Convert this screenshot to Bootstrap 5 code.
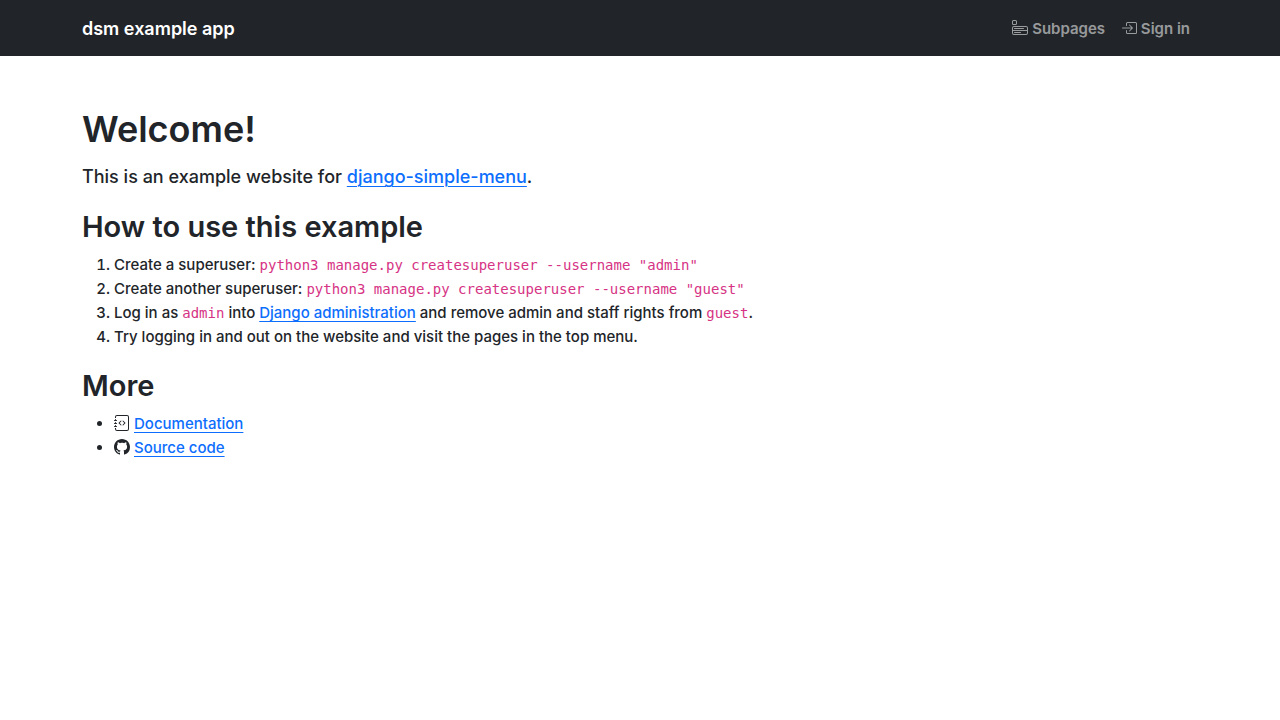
<!DOCTYPE html>
<html lang="en">
<head>
<meta charset="utf-8">
<meta name="viewport" content="width=device-width, initial-scale=1">
<title>dsm example app</title>
<link rel="stylesheet" href="https://cdn.jsdelivr.net/npm/bootstrap@5.3.0/dist/css/bootstrap.min.css">
<style>
body { font-family: Inter, "Liberation Sans", sans-serif; font-size: 15px; font-weight: 500; line-height: 24px; color: #212529; }
.navbar { padding: 9px 0 7px; }
.navbar-brand { font-size: 18px; line-height: 30px; font-weight: 600; }
.nav-link { font-size: 15px; font-weight: 600; }
h1 { font-size: 36px; line-height: 50px; font-weight: 600; }
h2 { font-size: 29px; line-height: 37px; font-weight: 600; }
.lead { font-size: 18px; line-height: 30px; font-weight: 500; }
main ol { margin-bottom: 18px; }
main a { text-underline-offset: 3px; text-decoration-thickness: 1px; }
code { font-family: "DejaVu Sans Mono", "Liberation Mono", monospace; font-size: 14px; }
.icon { width: 16px; height: 16px; vertical-align: -2px; fill: currentColor; }
</style>
</head>
<body>
<nav class="navbar navbar-expand-lg navbar-dark bg-dark">
  <div class="container">
    <a class="navbar-brand" href="#">dsm example app</a>
    <button class="navbar-toggler" type="button" data-bs-toggle="collapse" data-bs-target="#menu" aria-controls="menu" aria-expanded="false" aria-label="Toggle navigation"><span class="navbar-toggler-icon"></span></button>
    <div class="collapse navbar-collapse" id="menu">
      <ul class="navbar-nav ms-auto">
        <li class="nav-item"><a class="nav-link" href="#"><svg class="icon" viewBox="0 0 16 16" aria-hidden="true"><path d="M0 1.500A1.500 1.500 0 0 1 1.500 0h2A1.500 1.500 0 0 1 5 1.500v2A1.500 1.500 0 0 1 3.500 5h-2A1.500 1.500 0 0 1 0 3.500v-2zM1.500 1a.5.5 0 0 0-.5.5v2a.5.5 0 0 0 .5.5h2a.5.5 0 0 0 .5-.5v-2a.5.5 0 0 0-.5-.5h-2zM0 8a2 2 0 0 1 2-2h12a2 2 0 0 1 2 2v5a2 2 0 0 1-2 2H2a2 2 0 0 1-2-2V8zm1 3v2a1 1 0 0 0 1 1h12a1 1 0 0 0 1-1v-2H1zm14-1V8a1 1 0 0 0-1-1H2a1 1 0 0 0-1 1v2h14zM2 8.500a.5.5 0 0 1 .5-.5h9a.5.5 0 0 1 0 1h-9a.5.5 0 0 1-.5-.5zm0 4a.5.5 0 0 1 .5-.5h6a.5.5 0 0 1 0 1h-6a.5.5 0 0 1-.5-.5z"/></svg> Subpages</a></li>
        <li class="nav-item"><a class="nav-link" href="#"><svg class="icon" viewBox="0 0 16 16" aria-hidden="true"><path fill-rule="evenodd" d="M6 3.500a.5.5 0 0 1 .5-.5h8a.5.5 0 0 1 .5.5v9a.5.5 0 0 1-.5.5h-8a.5.5 0 0 1-.5-.5v-2a.5.5 0 0 0-1 0v2A1.500 1.500 0 0 0 6.500 14h8a1.500 1.500 0 0 0 1.500-1.500v-9A1.500 1.500 0 0 0 14.500 2h-8A1.500 1.500 0 0 0 5 3.500v2a.5.5 0 0 0 1 0z"/><path fill-rule="evenodd" d="M11.854 8.354a.5.5 0 0 0 0-.708l-3-3a.5.5 0 1 0-.708.708L10.293 7.500H1.500a.5.5 0 0 0 0 1h8.793l-2.147 2.146a.5.5 0 0 0 .708.708z"/></svg> Sign in</a></li>
      </ul>
    </div>
  </div>
</nav>
<main class="container py-5">
  <h1>Welcome!</h1>
  <p class="lead">This is an example website for <a href="#">django-simple-menu</a>.</p>
  <h2>How to use this example</h2>
  <ol>
    <li>Create a superuser: <code>python3 manage.py createsuperuser --username "admin"</code></li>
    <li>Create another superuser: <code>python3 manage.py createsuperuser --username "guest"</code></li>
    <li>Log in as <code>admin</code> into <a href="#">Django administration</a> and remove admin and staff rights from <code>guest</code>.</li>
    <li>Try logging in and out on the website and visit the pages in the top menu.</li>
  </ol>
  <h2>More</h2>
  <ul>
    <li><svg class="icon" viewBox="0 0 16 16" aria-hidden="true"><path fill-rule="evenodd" d="M8.646 5.646a.5.5 0 0 1 .708 0l2 2a.5.5 0 0 1 0 .708l-2 2a.5.5 0 0 1-.708-.708L10.293 8 8.646 6.354a.5.5 0 0 1 0-.708zm-1.292 0a.5.5 0 0 0-.708 0l-2 2a.5.5 0 0 0 0 .708l2 2a.5.5 0 0 0 .708-.708L5.707 8l1.647-1.646a.5.5 0 0 0 0-.708z"/><path d="M3 0h10a2 2 0 0 1 2 2v12a2 2 0 0 1-2 2H3a2 2 0 0 1-2-2v-1h1v1a1 1 0 0 0 1 1h10a1 1 0 0 0 1-1V2a1 1 0 0 0-1-1H3a1 1 0 0 0-1 1v1H1V2a2 2 0 0 1 2-2z"/><path d="M1 5v-.5a.5.5 0 0 1 1 0V5h.5a.5.5 0 0 1 0 1h-2a.5.5 0 0 1 0-1H1zm0 3v-.5a.5.5 0 0 1 1 0V8h.5a.5.5 0 0 1 0 1h-2a.5.5 0 0 1 0-1H1zm0 3v-.5a.5.5 0 0 1 1 0v.5h.5a.5.5 0 0 1 0 1h-2a.5.5 0 0 1 0-1H1z"/></svg> <a href="#">Documentation</a></li>
    <li><svg class="icon" viewBox="0 0 16 16" aria-hidden="true"><path d="M8 0C3.580 0 0 3.580 0 8c0 3.540 2.290 6.530 5.470 7.590.4.070.55-.17.55-.38 0-.19-.01-.82-.01-1.490-2.010.37-2.530-.49-2.690-.94-.09-.23-.48-.94-.82-1.130-.28-.15-.68-.52-.01-.53.63-.01 1.080.58 1.230.82.72 1.210 1.870.87 2.330.66.07-.52.28-.87.51-1.070-1.780-.2-3.640-.89-3.640-3.950 0-.87.31-1.590.82-2.150-.08-.2-.36-1.020.08-2.120 0 0 .67-.21 2.200.82.64-.18 1.320-.27 2-.27s1.360.09 2 .27c1.530-1.040 2.200-.82 2.200-.82.44 1.100.16 1.920.08 2.120.51.56.82 1.270.82 2.150 0 3.070-1.870 3.750-3.650 3.950.29.25.54.73.54 1.480 0 1.070-.01 1.930-.01 2.200 0 .21.15.46.55.38A8.010 8.010 0 0 0 16 8c0-4.420-3.580-8-8-8"/></svg> <a href="#">Source code</a></li>
  </ul>
</main>
<script src="https://cdn.jsdelivr.net/npm/bootstrap@5.3.0/dist/js/bootstrap.bundle.min.js"></script>
</body>
</html>
